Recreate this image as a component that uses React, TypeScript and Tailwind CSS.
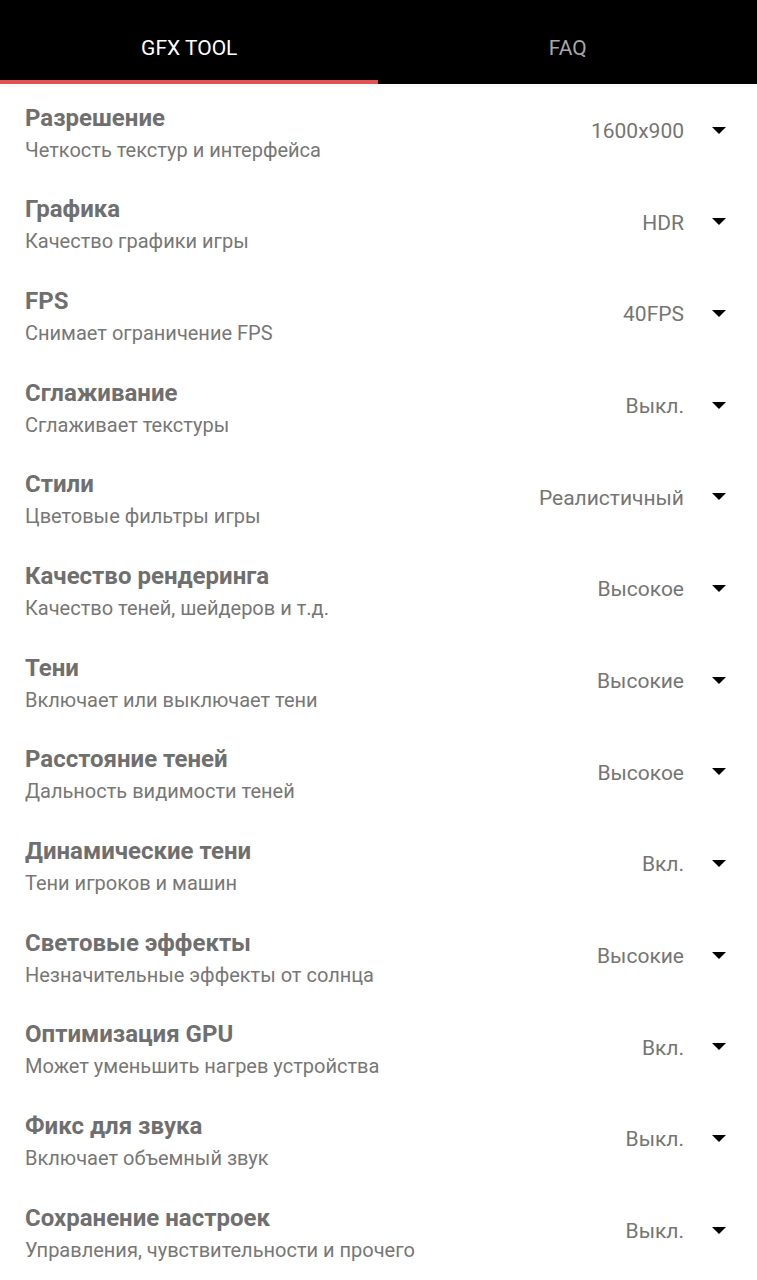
const ROWS = [
  { title: "Разрешение", sub: "Четкость текстур и интерфейса", value: "1600x900" },
  { title: "Графика", sub: "Качество графики игры", value: "HDR" },
  { title: "FPS", sub: "Снимает ограничение FPS", value: "40FPS" },
  { title: "Сглаживание", sub: "Сглаживает текстуры", value: "Выкл." },
  { title: "Стили", sub: "Цветовые фильтры игры", value: "Реалистичный" },
  { title: "Качество рендеринга", sub: "Качество теней, шейдеров и т.д.", value: "Высокое" },
  { title: "Тени", sub: "Включает или выключает тени", value: "Высокие" },
  { title: "Расстояние теней", sub: "Дальность видимости теней", value: "Высокое" },
  { title: "Динамические тени", sub: "Тени игроков и машин", value: "Вкл." },
  { title: "Световые эффекты", sub: "Незначительные эффекты от солнца", value: "Высокие" },
  { title: "Оптимизация GPU", sub: "Может уменьшить нагрев устройства", value: "Вкл." },
  { title: "Фикс для звука", sub: "Включает объемный звук", value: "Выкл." },
  { title: "Сохранение настроек", sub: "Управления, чувствительности и прочего", value: "Выкл." },
];

function Caret() {
  return (
    <svg width="14" height="8" viewBox="0 0 14 8" className="shrink-0">
      <path d="M0 0 L14 0 L7 7 Z" fill="#000" />
    </svg>
  );
}

export default function App() {
  return (
    <div className="w-[757px] h-[1280px] bg-white overflow-hidden" style={{ fontFamily: "Roboto, sans-serif" }}>
      <div className="bg-black h-[84px] flex flex-col">
        <div className="flex flex-1 pt-[17px]">
          <div className="w-1/2 flex items-center justify-center text-white text-[21px]">GFX TOOL</div>
          <div className="w-1/2 flex items-center justify-center text-[#a8a8a8] text-[21px]">FAQ</div>
        </div>
        <div className="flex h-[4px]">
          <div className="w-[378px] bg-[#e05252]" />
        </div>
      </div>
      <div className="shadow-[0_1px_2px_rgba(0,0,0,0.08)] h-px" />
      <div className="flex flex-col">
        {ROWS.map((r) => (
          <div key={r.title} className="h-[91.67px] flex items-center pl-[25px] pr-[31px]">
            <div className="flex-1 flex flex-col pt-[6px]">
              <div className="text-[24px] leading-[30px] font-bold text-[#6f6f6f]">{r.title}</div>
              <div className="text-[20px] leading-[30px] text-[#777777] mt-[2px]">{r.sub}</div>
            </div>
            <div className="text-[21px] text-[#757575] mr-[28px] pt-[2px]">{r.value}</div>
            <Caret />
          </div>
        ))}
      </div>
    </div>
  );
}
